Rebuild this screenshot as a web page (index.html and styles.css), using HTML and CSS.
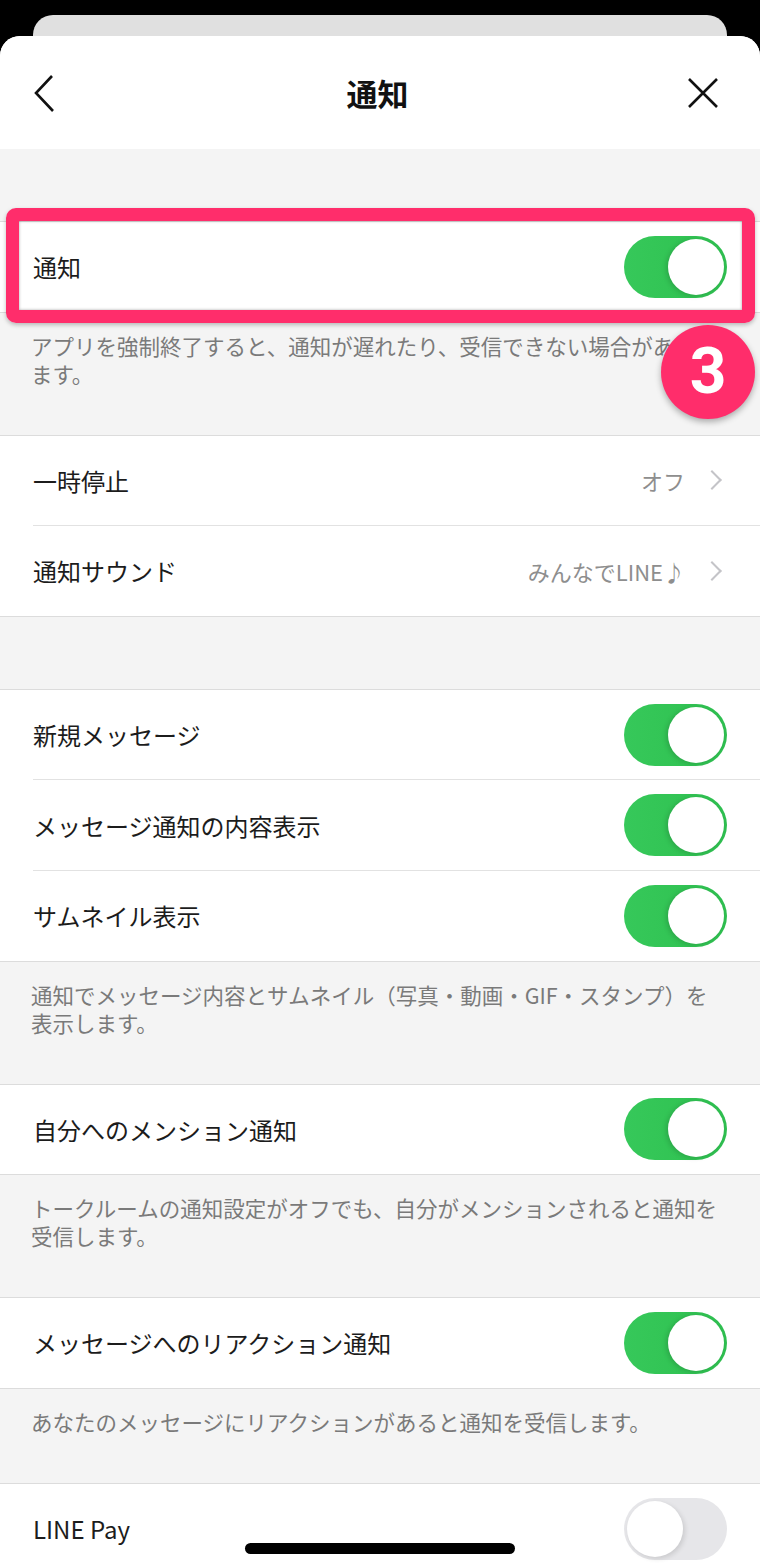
FILE: index.html
```html
<!DOCTYPE html>
<html lang="ja">
<head>
  <meta charset="UTF-8" />
  <meta name="viewport" content="width=device-width, initial-scale=1.0"/>
  <title>通知</title>
  <link rel="stylesheet" href="styles.css">
</head>
<body>
  <div class="back-card"></div>
  <div class="sheet">
    <div class="header">
      <svg class="nav-icon back" width="30" height="40" viewBox="0 0 30 40">
        <polyline points="19,2 3,19 20,37" fill="none" stroke="#111" stroke-width="2.6"/>
      </svg>
      <h1>通知</h1>
      <svg class="nav-icon close" width="34" height="34" viewBox="0 0 34 34">
        <path d="M3 3 L31 31 M31 3 L3 31" fill="none" stroke="#111" stroke-width="2.6"/>
      </svg>
    </div>

    <div class="gap"></div>
    <div class="section highlight">
      <div class="row">
        <span class="label">通知</span>
        <span class="toggle on"></span>
      </div>
    </div>
    <div class="note">アプリを強制終了すると、通知が遅れたり、受信できない場合があり<br>ます。</div>
    <div class="badge">3</div>

    <div class="section">
      <div class="row">
        <span class="label">一時停止</span>
        <span class="value">オフ</span>
        <span class="chev"></span>
      </div>
      <div class="row">
        <span class="label">通知サウンド</span>
        <span class="value">みんなでLINE♪</span>
        <span class="chev"></span>
      </div>
    </div>

    <div class="gap"></div>
    <div class="section">
      <div class="row">
        <span class="label">新規メッセージ</span>
        <span class="toggle on"></span>
      </div>
      <div class="row">
        <span class="label">メッセージ通知の内容表示</span>
        <span class="toggle on"></span>
      </div>
      <div class="row">
        <span class="label">サムネイル表示</span>
        <span class="toggle on"></span>
      </div>
    </div>
    <div class="note">通知でメッセージ内容とサムネイル（写真・動画・GIF・スタンプ）を<br>表示します。</div>

    <div class="section">
      <div class="row">
        <span class="label">自分へのメンション通知</span>
        <span class="toggle on"></span>
      </div>
    </div>
    <div class="note">トークルームの通知設定がオフでも、自分がメンションされると通知を<br>受信します。</div>

    <div class="section">
      <div class="row">
        <span class="label">メッセージへのリアクション通知</span>
        <span class="toggle on"></span>
      </div>
    </div>
    <div class="note">あなたのメッセージにリアクションがあると通知を受信します。</div>

    <div class="section">
      <div class="row">
        <span class="label">LINE Pay</span>
        <span class="toggle"></span>
      </div>
    </div>
  </div>
  <div class="home-bar"></div>
</body>
</html>
```

FILE: styles.css
```css
body { margin: 0; background: #000; height: 1563px; overflow: hidden; position: relative; font-family: "Noto Sans CJK JP", "Noto Sans", sans-serif; color: #1c1c1c; }
.back-card { margin: 15px 33px 0; height: 21px; background: #e0e0e0; border-radius: 20px 20px 0 0; }
.sheet { position: relative; background: #f4f4f4; border-radius: 20px 20px 0 0; height: 1527px; overflow: hidden; }
.header { height: 113px; background: #fff; display: flex; align-items: center; justify-content: space-between; padding: 0 40px 0 33px; }
.header h1 { margin: 0 0 0 6px; font-size: 31px; font-weight: 700; color: #111; }
.nav-icon { display: block; }
.nav-icon.back { margin-top: 2px; }
.gap { height: 72px; }
.section { background: #fff; border-top: 1px solid #dcdcdc; border-bottom: 1px solid #dcdcdc; }
.row { height: 89.6px; margin-left: 33px; padding-right: 33px; display: flex; align-items: center; }
.row + .row { border-top: 1px solid #e2e2e2; }
.label { flex: 1; font-size: 24px; }
.value { font-size: 22px; color: #8e8e8e; margin-right: 20px; }
.chev { width: 12px; height: 12px; border-top: 2.5px solid #c4c4c8; border-right: 2.5px solid #c4c4c8; transform: rotate(45deg); margin-right: 8px; }
.toggle { width: 103px; height: 62px; border-radius: 31px; background: #e6e6e9; position: relative; }
.toggle::after { content: ""; position: absolute; top: 3px; left: 3px; width: 56px; height: 56px; border-radius: 50%; background: #fff; box-shadow: 2px 2px 5px rgba(0,0,0,0.12); }
.toggle.on { background: linear-gradient(90deg, #36c85a 0%, #32c454 55%, #2fbf50 100%); }
.toggle.on::after { left: 44px; box-shadow: -2px 1px 5px rgba(0,0,0,0.15); }
.note { padding: 19px 25px 47px 31px; font-size: 21.5px; line-height: 28px; color: #7a7a7a; }
.highlight { position: relative; }
.highlight::after { content: ""; position: absolute; top: -14px; left: 6px; right: 5px; bottom: -11px; border: 13px solid #ff2d6b; border-radius: 10px; box-shadow: 0 2px 4px rgba(0,0,0,0.25), inset 0 0 3px rgba(0,0,0,0.35); }
.badge { position: absolute; top: 289px; left: 661px; width: 94px; height: 94px; border-radius: 50%; background: #ff2d6b; color: #fff; font-family: Roboto, sans-serif; font-weight: 700; font-size: 64px; line-height: 94px; text-align: center; box-shadow: 0 3px 6px rgba(0,0,0,0.3); }
.home-bar { position: absolute; left: 245px; top: 1543px; width: 270px; height: 11px; border-radius: 6px; background: #000; }
```
